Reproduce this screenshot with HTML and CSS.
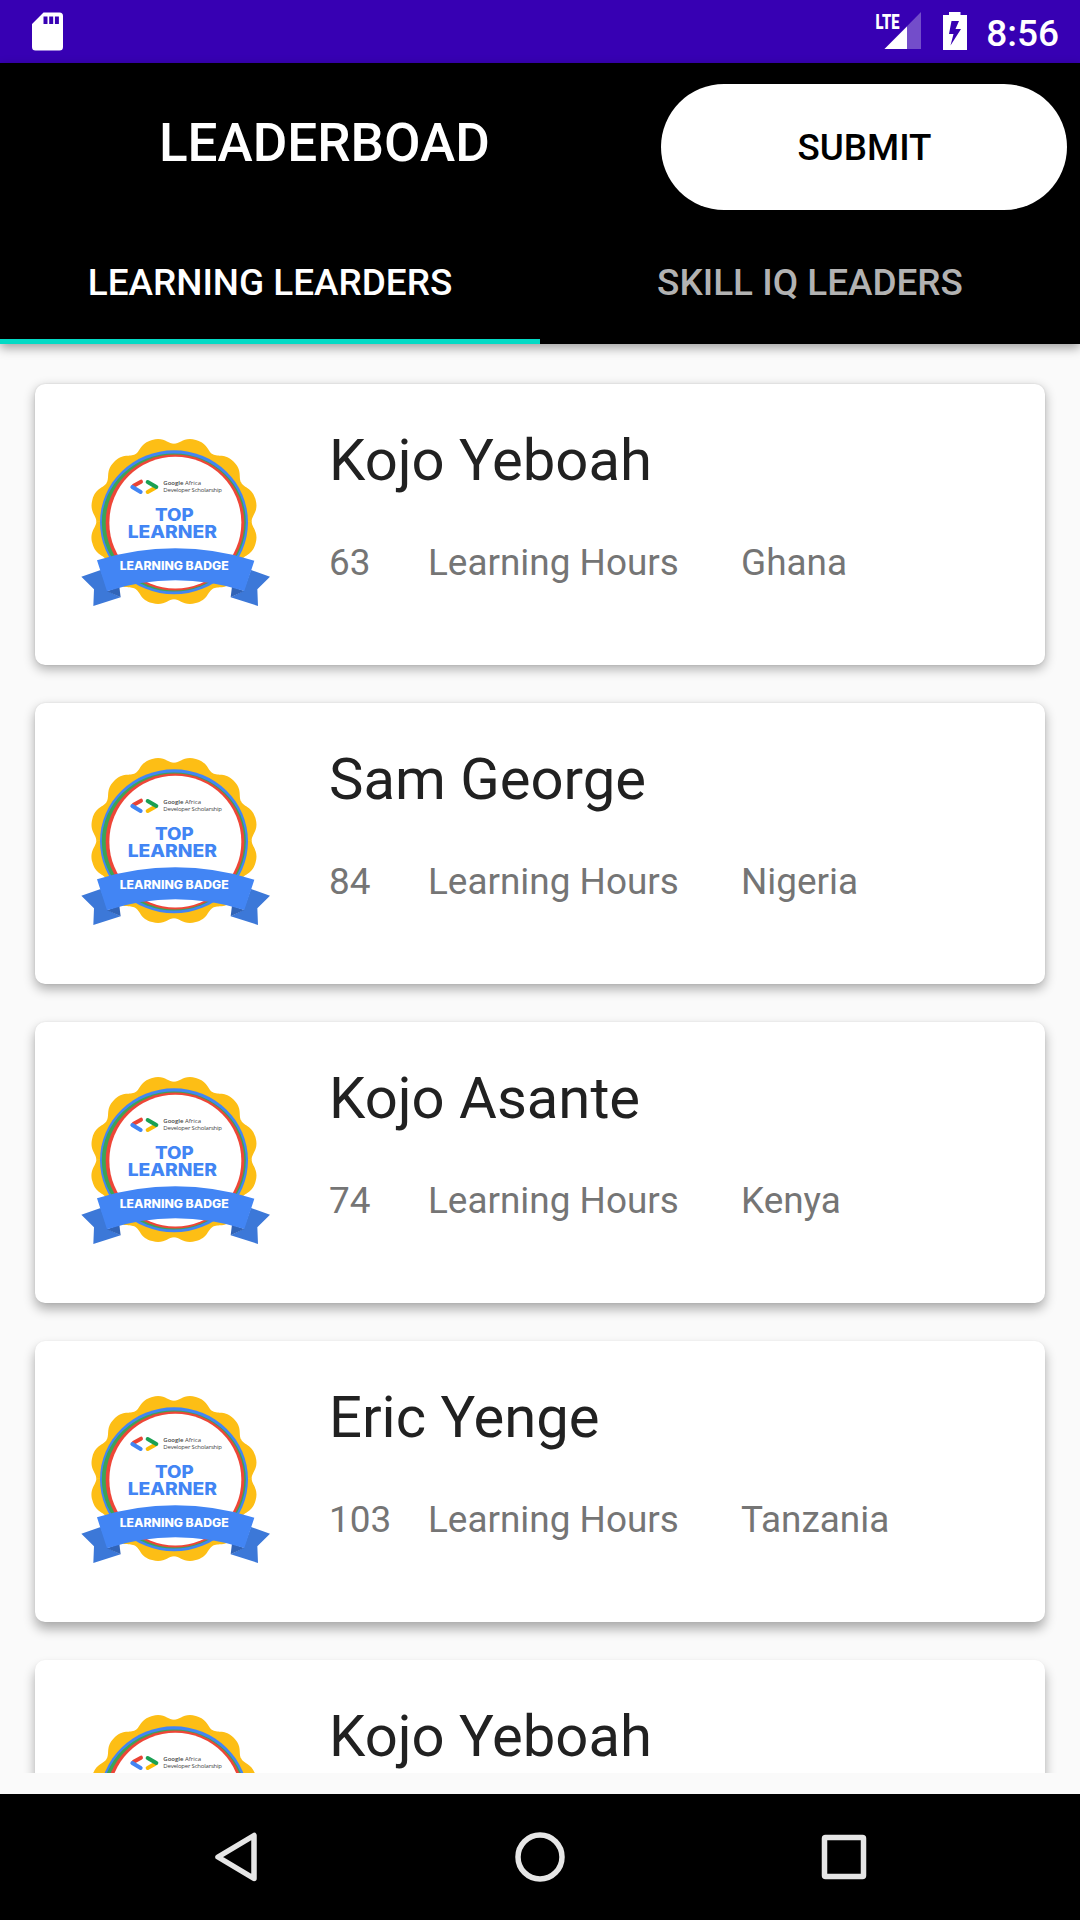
FILE: index.html
```html
<!DOCTYPE html>
<html lang="en">
<head>
<meta charset="utf-8">
<title>Leaderboard</title>
<link rel="stylesheet" href="styles.css">
</head>
<body>
<svg class="defs" width="0" height="0" aria-hidden="true">
  <defs>
    <path id="petal" d="M0 0L-61 -224.8L-60.300 -225C-42 -230 -38 -253.500 0 -253.500C38 -253.500 42 -230 60.300 -225L61 -224.800Z"/>
    <g id="badge">
      <g fill="#fdbe15" transform="translate(342 304.5)">
        <use href="#petal" transform="rotate(15)"/><use href="#petal" transform="rotate(45)"/>
        <use href="#petal" transform="rotate(75)"/><use href="#petal" transform="rotate(105)"/>
        <use href="#petal" transform="rotate(135)"/><use href="#petal" transform="rotate(165)"/>
        <use href="#petal" transform="rotate(195)"/><use href="#petal" transform="rotate(225)"/>
        <use href="#petal" transform="rotate(255)"/><use href="#petal" transform="rotate(285)"/>
        <use href="#petal" transform="rotate(315)"/><use href="#petal" transform="rotate(345)"/>
      </g>
      <ellipse cx="342" cy="307" rx="222" ry="216" fill="#4285f4"/>
      <ellipse cx="341.500" cy="307.500" rx="216" ry="207" fill="#3da456"/>
      <ellipse cx="345" cy="307.500" rx="208" ry="204" fill="#ee4637"/>
      <ellipse cx="346" cy="308" rx="198" ry="197.500" fill="#fff"/>
      <g fill="none" stroke-width="12" stroke-linecap="round">
        <path d="M221 197L243 185" stroke="#ea4335"/>
        <path d="M217 201L242 216" stroke="#4285f4"/>
        <path d="M263 216L286 203" stroke="#fbbc04"/>
        <path d="M263 186L289 201" stroke="#1aa053"/>
      </g>
      <path d="M64 470L122 450L145 514L182 532L100 558L102 508Z" fill="#3c78d8"/>
      <path d="M630 470L573 450L550 513L512 532L594 558L592 508Z" fill="#3c78d8"/>
      <path d="M141 514L178 500L182 532Z" fill="#3164b8"/>
      <path d="M553 513L516 500L512 532Z" fill="#3164b8"/>
      <path d="M111 421Q225 385 346 385Q467 385 583 422L553 513Q450 481 346 481Q242 481 141 514Z" fill="#4285f4"/>
    </g>
  </defs>
</svg>

<div class="screen">
  <div class="status">
    <svg class="sd" viewBox="0 0 31 38"><path fill="#fff" fill-rule="evenodd" d="M11.500 0H27.500Q31 0 31 3.500V34.500Q31 38 27.500 38H3.500Q0 38 0 34.500V11.500ZM11.500 4V11.500H15.500V4ZM17.200 4V11.500H21.200V4ZM22.900 4V11.500H26.900V4Z"/></svg>
    <div class="status-right">
      <svg class="signal" viewBox="0 -8 46 46">
        <path d="M46 0V37H9.500Z" fill="#fff" opacity=".3"/>
        <path d="M32 14.500V37H9.500Z" fill="#fff"/>
        <text class="lte" x="0.500" y="16.500" textLength="24" lengthAdjust="spacingAndGlyphs">LTE</text>
      </svg>
      <svg class="battery" viewBox="0 0 24 38"><path fill="#fff" fill-rule="evenodd" d="M6 0H17.500V3H24V38H0V3H6ZM8.500 9L6 22H10.500L7.500 33.500L18 17H12.500L16 9Z"/></svg>
      <span class="clock">8:56</span>
    </div>
  </div>

  <header class="appbar">
    <div class="toolbar">
      <h1 class="title">LEADERBOAD</h1>
      <button class="submit">SUBMIT</button>
    </div>
    <nav class="tabs">
      <span class="tab active">LEARNING LEARDERS</span>
      <span class="tab">SKILL IQ LEADERS</span>
    </nav>
  </header>

  <main class="list">
    <article class="card s1">
      <svg class="badge" viewBox="0 0 690 600"><use href="#badge"/><text class="org" x="310" y="195" textLength="113"><tspan class="b">Google</tspan> Africa</text><text class="org" x="310" y="216" textLength="176">Developer Scholarship</text><text class="top" x="285" y="304" textLength="116" lengthAdjust="spacingAndGlyphs">TOP</text><text class="top" x="203" y="353.500" textLength="268" lengthAdjust="spacingAndGlyphs">LEARNER</text><text class="ribbon" x="179" y="451" textLength="327" lengthAdjust="spacingAndGlyphs">LEARNING BADGE</text></svg>
      <div class="info"><h2 class="name">Kojo Yeboah</h2><div class="meta"><span class="hours">63</span><span class="label">Learning Hours</span><span>Ghana</span></div></div>
    </article>
    <article class="card s2">
      <svg class="badge" viewBox="0 0 690 600"><use href="#badge"/><text class="org" x="310" y="195" textLength="113"><tspan class="b">Google</tspan> Africa</text><text class="org" x="310" y="216" textLength="176">Developer Scholarship</text><text class="top" x="285" y="304" textLength="116" lengthAdjust="spacingAndGlyphs">TOP</text><text class="top" x="203" y="353.500" textLength="268" lengthAdjust="spacingAndGlyphs">LEARNER</text><text class="ribbon" x="179" y="451" textLength="327" lengthAdjust="spacingAndGlyphs">LEARNING BADGE</text></svg>
      <div class="info"><h2 class="name">Sam George</h2><div class="meta"><span class="hours">84</span><span class="label">Learning Hours</span><span>Nigeria</span></div></div>
    </article>
    <article class="card s3">
      <svg class="badge" viewBox="0 0 690 600"><use href="#badge"/><text class="org" x="310" y="195" textLength="113"><tspan class="b">Google</tspan> Africa</text><text class="org" x="310" y="216" textLength="176">Developer Scholarship</text><text class="top" x="285" y="304" textLength="116" lengthAdjust="spacingAndGlyphs">TOP</text><text class="top" x="203" y="353.500" textLength="268" lengthAdjust="spacingAndGlyphs">LEARNER</text><text class="ribbon" x="179" y="451" textLength="327" lengthAdjust="spacingAndGlyphs">LEARNING BADGE</text></svg>
      <div class="info"><h2 class="name">Kojo Asante</h2><div class="meta"><span class="hours">74</span><span class="label">Learning Hours</span><span>Kenya</span></div></div>
    </article>
    <article class="card s4">
      <svg class="badge" viewBox="0 0 690 600"><use href="#badge"/><text class="org" x="310" y="195" textLength="113"><tspan class="b">Google</tspan> Africa</text><text class="org" x="310" y="216" textLength="176">Developer Scholarship</text><text class="top" x="285" y="304" textLength="116" lengthAdjust="spacingAndGlyphs">TOP</text><text class="top" x="203" y="353.500" textLength="268" lengthAdjust="spacingAndGlyphs">LEARNER</text><text class="ribbon" x="179" y="451" textLength="327" lengthAdjust="spacingAndGlyphs">LEARNING BADGE</text></svg>
      <div class="info"><h2 class="name">Eric Yenge</h2><div class="meta"><span class="hours">103</span><span class="label">Learning Hours</span><span>Tanzania</span></div></div>
    </article>
    <article class="card s5">
      <svg class="badge" viewBox="0 0 690 600"><use href="#badge"/><text class="org" x="310" y="195" textLength="113"><tspan class="b">Google</tspan> Africa</text><text class="org" x="310" y="216" textLength="176">Developer Scholarship</text></svg>
      <div class="info"><h2 class="name">Kojo Yeboah</h2></div>
    </article>
  </main>

  <footer class="navbar">
    <svg class="key" viewBox="0 0 56 56"><path d="M46 6.500V49.500L10 28Z"/></svg>
    <svg class="key" viewBox="0 0 56 56"><circle cx="28" cy="28" r="22"/></svg>
    <svg class="key" viewBox="0 0 56 56"><rect x="8.500" y="8.500" width="39" height="39" rx="1"/></svg>
  </footer>
</div>
</body>
</html>
```

FILE: styles.css
```css
* { box-sizing: border-box; }
body {
  margin: 0;
  background: #fafafa;
  font-family: Roboto, "Noto Sans", sans-serif;
}
.defs { display: block; }
.screen {
  width: 1080px;
  height: 1920px;
  display: flex;
  flex-direction: column;
  overflow: hidden;
}

/* status bar */
.status {
  flex: none;
  height: 63px;
  background: #3700b3;
  color: #fff;
  display: flex;
  justify-content: space-between;
  align-items: flex-start;
  padding: 4px 21px 0 32px;
}
.sd { width: 31px; height: 39px; margin-top: 8px; }
.status-right { display: flex; align-items: flex-start; }
.signal { width: 46px; height: 46px; margin-right: 22px; }
.lte { font: 900 21px Roboto, sans-serif; fill: #fff; }
.battery { width: 24px; height: 38px; margin: 8px 19px 0 0; }
.clock { font-size: 37px; font-weight: 500; line-height: 43px; margin-top: 8px; }

/* app bar */
.appbar {
  flex: none;
  height: 281px;
  background: #000;
  position: relative;
  z-index: 1;
  box-shadow: 0 4px 10px rgba(0, 0, 0, .36);
}
.toolbar {
  height: 155px;
  display: flex;
  justify-content: space-between;
  align-items: flex-start;
  padding: 21px 13px 0 159px;
}
.title {
  margin: 28px 0 0;
  font-size: 53px;
  line-height: 62px;
  font-weight: 500;
  color: #fff;
}
.submit {
  width: 406px;
  height: 126px;
  border: 0;
  border-radius: 63px;
  padding: 1px 0 0 1px;
  background: #fff;
  color: #000;
  font: 500 36.75px/43px Roboto, sans-serif;
}
.tabs { display: flex; height: 126px; }
.tab {
  flex: 1;
  text-align: center;
  font-size: 36.9px;
  font-weight: 500;
  line-height: 43px;
  padding-top: 43px;
  color: #b2b2b2;
}
.tab.active { color: #fff; border-bottom: 5px solid #03dac5; }

/* list */
.list {
  flex: none;
  height: 1429px;
  overflow: hidden;
  padding: 40px 35px 0;
  display: flex;
  flex-direction: column;
  gap: 38px;
}
.card {
  flex: none;
  height: 281px;
  border-radius: 10px;
  background: #fff;
  display: flex;
  padding: 36px 0 0 25px;
}
.s1 { box-shadow: 0 4px 12px rgba(0, 0, 0, .32), 0 0 2px rgba(0, 0, 0, .12); }
.s2 { box-shadow: 0 5px 12px rgba(0, 0, 0, .32), 0 0 2px rgba(0, 0, 0, .1); }
.s3 { box-shadow: 0 6px 12px rgba(0, 0, 0, .32), 0 0 2px rgba(0, 0, 0, .08); }
.s4 { box-shadow: 0 7px 12px rgba(0, 0, 0, .32), 0 0 2px rgba(0, 0, 0, .06); }
.s5 { box-shadow: 0 8px 12px rgba(0, 0, 0, .32), 0 0 2px rgba(0, 0, 0, .04); }
.badge { flex: none; width: 230px; height: 200px; }
.badge text { font-family: Inter, sans-serif; }
.badge .org { font-family: "Open Sans", sans-serif; font-size: 18px; fill: #444; }
.badge .org .b { font-weight: 600; }
.badge .top { font-size: 51px; font-weight: 800; fill: #4285f4; }
.badge .ribbon { font-size: 35px; font-weight: 800; fill: #fff; }
.info { padding-left: 39px; }
.name {
  margin: 6px 0 0;
  font-size: 58px;
  line-height: 68px;
  font-weight: 400;
  color: #212121;
}
.meta {
  display: flex;
  margin-top: 47px;
  font-size: 36.9px;
  line-height: 43px;
  color: #757575;
}
.hours { width: 99px; }
.label { width: 313px; }

/* navigation keys */
.navbar {
  flex: none;
  margin-top: 21px;
  height: 126px;
  background: #000;
  display: flex;
  justify-content: center;
  align-items: center;
  gap: 248px;
}
.key {
  width: 56px;
  height: 56px;
  fill: none;
  stroke: #e6e6e6;
  stroke-width: 5.5;
  stroke-linejoin: round;
}
```
